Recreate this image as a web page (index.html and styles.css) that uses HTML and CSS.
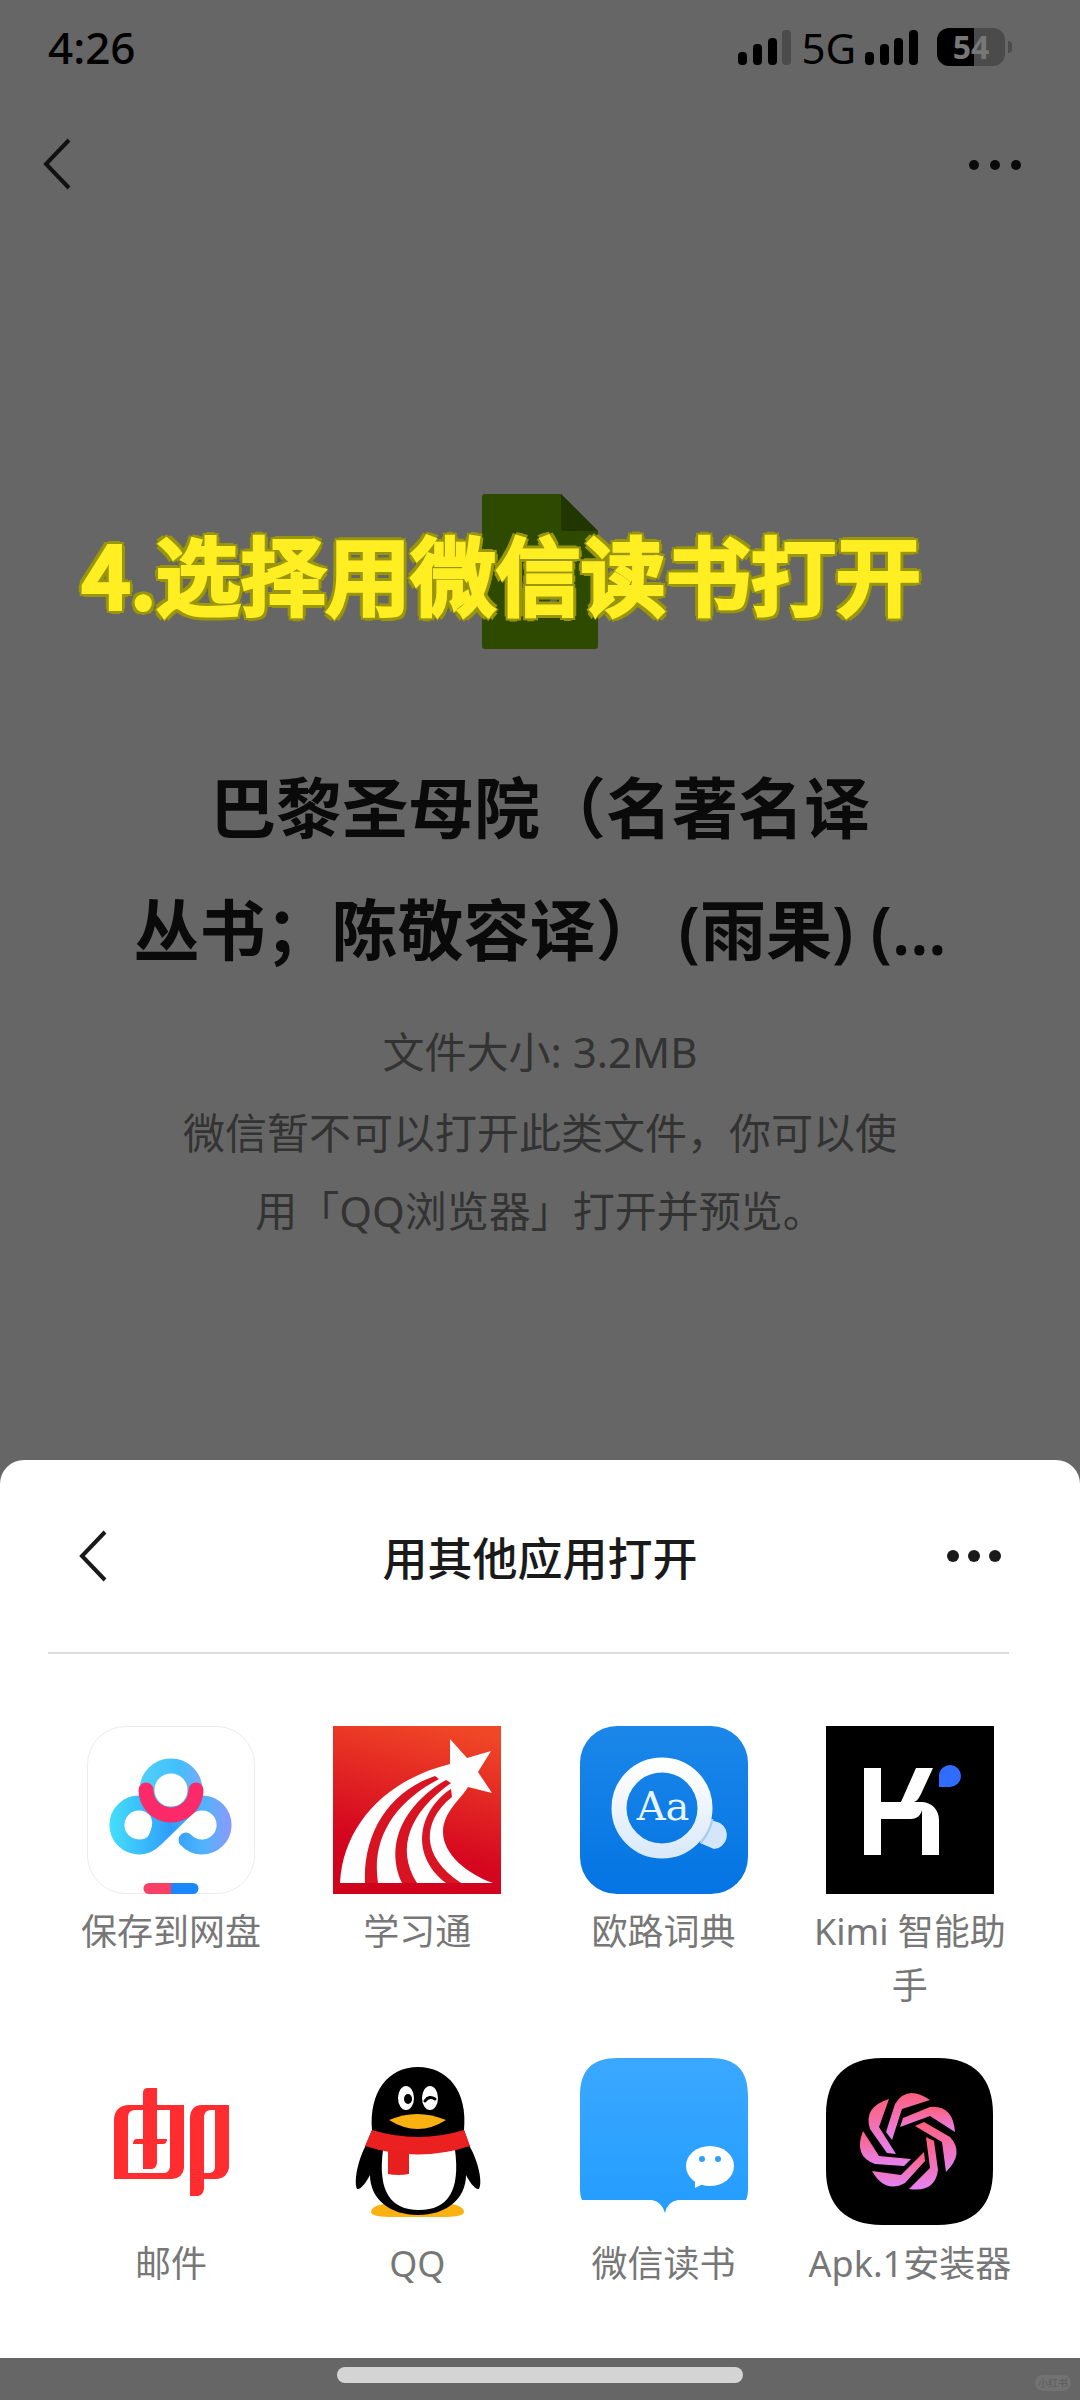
FILE: index.html
```html
<!DOCTYPE html>
<html lang="zh-CN">
<head>
    <meta charset="UTF-8">
    <meta name="viewport" content="width=device-width, initial-scale=1.0">
    <title>用其他应用打开</title>
    <link rel="stylesheet" href="styles.css">
</head>
<body>
    <div class="status-bar">
        <span class="time">4:26</span>
        <div class="status-right">
            <svg class="signal" viewBox="0 0 54 36">
                <rect x="0" y="23" width="9" height="13" rx="4"/>
                <rect x="15" y="15" width="9" height="21" rx="4"/>
                <rect x="30" y="9" width="9" height="27" rx="4"/>
                <rect x="44" y="1" width="9" height="35" rx="4" fill="#4b4b4b"/>
            </svg>
            <span class="network">5G</span>
            <svg class="signal" viewBox="0 0 54 36">
                <rect x="0" y="23" width="9" height="13" rx="4"/>
                <rect x="15" y="15" width="9" height="21" rx="4"/>
                <rect x="29" y="9" width="9" height="27" rx="4"/>
                <rect x="44" y="1" width="9" height="35" rx="4"/>
            </svg>
            <div class="battery">54</div>
        </div>
    </div>

    <header class="nav">
        <button class="icon-btn" aria-label="返回">
            <svg width="30" height="52" viewBox="0 0 30 52"><path d="M27 2L4 26l23 24" fill="none" stroke="#111" stroke-width="4"/></svg>
        </button>
        <button class="icon-btn" aria-label="更多">
            <svg width="54" height="12" viewBox="0 0 54 12" fill="#0a0a0a"><circle cx="6" cy="7" r="5"/><circle cx="27" cy="7" r="5"/><circle cx="48" cy="7" r="5"/></svg>
        </button>
    </header>

    <main class="file">
        <div class="file-cover">
            <svg class="file-icon" viewBox="0 0 116 155">
                <path d="M3 0h76l37 37v115a3 3 0 0 1-3 3H3a3 3 0 0 1-3-3V3a3 3 0 0 1 3-3z" fill="#2d4a00"/>
                <path d="M79 0l37 37H82a3 3 0 0 1-3-3z" fill="#203500"/>
                <path d="M58 74L35 97l23 23 23-23z" fill="none" stroke="#666" stroke-width="5"/>
            </svg>
            <p class="caption">4.选择用微信读书打开</p>
        </div>
        <h1>巴黎圣母院（名著名译<br>丛书；陈敬容译） (雨果) (...</h1>
        <p class="size">文件大小: 3.2MB</p>
        <p class="tip">微信暂不可以打开此类文件，你可以使用「QQ浏览器」打开并预览。</p>
    </main>

    <section class="sheet">
        <div class="sheet-header">
            <button class="icon-btn" aria-label="返回">
                <svg width="30" height="52" viewBox="0 0 30 52"><path d="M27 2L4 26l23 24" fill="none" stroke="#1a1a1a" stroke-width="4"/></svg>
            </button>
            <h2>用其他应用打开</h2>
            <button class="icon-btn" aria-label="更多">
                <svg width="56" height="14" viewBox="0 0 56 14" fill="#1a1a1a"><circle cx="7" cy="7" r="6"/><circle cx="28" cy="7" r="6"/><circle cx="49" cy="7" r="6"/></svg>
            </button>
        </div>
        <hr class="divider">

        <div class="apps">
            <button class="app">
                <svg viewBox="0 0 168 168">
                    <defs>
                        <linearGradient id="pan" gradientUnits="userSpaceOnUse" x1="22" y1="0" x2="146" y2="0">
                            <stop offset="0" stop-color="#45e0fb"/>
                            <stop offset=".5" stop-color="#2f9dfb"/>
                            <stop offset=".75" stop-color="#4db4fc"/>
                            <stop offset="1" stop-color="#8f98fb"/>
                        </linearGradient>
                        <linearGradient id="panTop" gradientUnits="userSpaceOnUse" x1="52" y1="60" x2="116" y2="64">
                            <stop offset="0" stop-color="#52d0f8"/>
                            <stop offset=".6" stop-color="#41bffd"/>
                            <stop offset="1" stop-color="#7fa8fb"/>
                        </linearGradient>
                    </defs>
                    <rect x=".5" y=".5" width="167" height="167" rx="38" fill="#fff" stroke="#ececec"/>
                    <path d="M99 114A22 22 0 1 0 100 83L68 114A22 22 0 1 1 68 84Q78 96 67 115" fill="none" stroke="url(#pan)" stroke-width="15" stroke-linecap="round"/>
                    <circle cx="84" cy="64" r="24" fill="#fff" stroke="url(#panTop)" stroke-width="15"/>
                    <path d="M59 64a24.500 24.500 0 0 0 50 0" fill="none" stroke="#fc2a68" stroke-width="15" stroke-linecap="round"/>
                    <path d="M62 157h22v11H62a5.500 5.500 0 0 1 0-11z" fill="#fb4068"/>
                    <path d="M84 157h22a5.500 5.500 0 0 1 0 11H84z" fill="#1a88fb"/>
                </svg>
                <span>保存到网盘</span>
            </button>
            <button class="app">
                <svg viewBox="0 0 168 168">
                    <defs>
                        <linearGradient id="xxt" x1=".7" y1="0" x2=".45" y2="1">
                            <stop offset="0" stop-color="#f04727"/>
                            <stop offset=".75" stop-color="#d5061f"/>
                            <stop offset="1" stop-color="#d0021b"/>
                        </linearGradient>
                    </defs>
                    <path d="M0 0h168v168H0z" fill="url(#xxt)"/>
                    <path d="M117 13l17 19 24-7-13 21 14 21-24-6c-7 12-25 25-25 45 0 22 24 42 50 51H7c3-57 45-103 110-119z" fill="#fff"/>
                    <path d="M102 50C55 66 30 108 32 157h13C38 112 62 76 106 53z" fill="#d81422"/>
                    <path d="M113 54C75 76 50 115 69 157h15C62 122 77 86 118 57z" fill="#d81422"/>
                    <path d="M118 63C88 82 74 127 113 157h15C87 130 89 95 119 71z" fill="#da1523"/>
                </svg>
                <span>学习通</span>
            </button>
            <button class="app">
                <svg viewBox="0 0 168 168">
                    <defs>
                        <linearGradient id="dict" x1="0" y1="0" x2="0" y2="1">
                            <stop offset="0" stop-color="#1b87ea"/>
                            <stop offset="1" stop-color="#0374e2"/>
                        </linearGradient>
                        <linearGradient id="ring" x1="0" y1="0" x2="0" y2="1">
                            <stop offset="0" stop-color="#fff"/>
                            <stop offset="1" stop-color="#dbeafa"/>
                        </linearGradient>
                    </defs>
                    <rect width="168" height="168" rx="37" fill="url(#dict)"/>
                    <path d="M131 94l9 3a14 14 0 0 1-6 26l-14-6z" fill="#d3e6fa"/>
                    <path d="M132 93a51 51 0 0 1-11 23" fill="none" stroke="#a9cdf3" stroke-width="3"/>
                    <circle cx="82" cy="82" r="43" fill="none" stroke="url(#ring)" stroke-width="15"/>
                    <text x="83" y="94" class="dict-text">Aa</text>
                </svg>
                <span>欧路词典</span>
            </button>
            <button class="app">
                <svg viewBox="0 0 168 168">
                    <path d="M0 0h168v168H0z"/>
                    <path d="M38 42h17v34h20l15-34h17L95 68c-2 4-4 7-7 8h7c11 0 18 8 18 18v35H96V84c-1 5-5 9-11 9H55v36H38z" fill="#fff"/>
                    <path d="M113 61V49a11 11 0 1 1 11 12z" fill="#2f6cff"/>
                </svg>
                <span>Kimi 智能助手</span>
            </button>
            <button class="app">
                <svg viewBox="0 0 168 168" fill="#ff2d2f">
                    <path fill-rule="evenodd" d="M27 121V61q1-13 14-14h56v63q-1 10-12 11zM41 115h37q4-1 5-6V52H48q-6 0-7 6z"/>
                    <path d="M56 35q0-5 5-5h9v75q-1 6-6 6h-8z"/>
                    <path d="M46 86q0-5 4-5h30q0 5-4 5z"/>
                    <path fill-rule="evenodd" d="M103 138V59q1-12 12-12h27v63q-2 10-12 11h-13v10q-1 6-6 7zM117 115h6q5-1 5-6V52h-4q-6 0-7 6z"/>
                </svg>
                <span>邮件</span>
            </button>
            <button class="app">
                <svg viewBox="0 0 168 168">
                    <path d="M38 154c0-6 12-9 25-9h44c12 0 24 3 24 9 0 4-10 5-22 5H60c-12 0-22-1-22-5z" fill="#fbb10f"/>
                    <path d="M39 72C36 34 55 9 85 9s50 25 46 63l6 17c8 14 13 35 9 42-4 1-10-8-13-14 0 24-20 40-48 40s-48-16-48-40c-3 6-9 15-13 14-3-7 0-26 8-42z"/>
                    <path d="M50 92q-8 60 36 60t36-60z" fill="#fff"/>
                    <path d="M39 72q46 14 92 0l6 16q-52 17-105 0z" fill="#eb2020"/>
                    <path d="M55 92h21v24q-11 2-21 0z" fill="#e81f1f"/>
                    <ellipse cx="73" cy="40" rx="8" ry="12" fill="#fff"/>
                    <ellipse cx="97" cy="40" rx="8" ry="12" fill="#fff"/>
                    <ellipse cx="75" cy="41" rx="4" ry="5"/>
                    <path d="M92 43q4-6 10-2" fill="none" stroke="#000" stroke-width="3" stroke-linecap="round"/>
                    <path d="M56 62q28-12 57 0-28 18-57 0z" fill="#fbb10f"/>
                </svg>
                <span>QQ</span>
            </button>
            <button class="app">
                <svg viewBox="0 0 168 168">
                    <defs>
                        <linearGradient id="read" x1="0" y1="0" x2="0" y2="1">
                            <stop offset="0" stop-color="#3ba8ff"/>
                            <stop offset="1" stop-color="#239dff"/>
                        </linearGradient>
                    </defs>
                    <path d="M0 38C0 12 12 0 38 0h92c26 0 38 12 38 38v92q0 8-2 12H98q-11 2-13 13-3-11-13-13H2q-2-4-2-12z" fill="url(#read)"/>
                    <ellipse cx="130" cy="108" rx="24" ry="20" fill="#fff"/>
                    <path d="M115 120v10l10-5z" fill="#fff"/>
                    <circle cx="122" cy="101" r="3" fill="#2ca0ff"/>
                    <circle cx="138" cy="101" r="3" fill="#2ca0ff"/>
                </svg>
                <span>微信读书</span>
            </button>
            <button class="app">
                <svg viewBox="0 0 168 168">
                    <defs>
                        <linearGradient id="blade" x1="0" y1="0" x2="0" y2="1">
                            <stop offset="0" stop-color="#ff5f79"/>
                            <stop offset="1" stop-color="#e583f3"/>
                        </linearGradient>
                    </defs>
                    <path d="M0 56C0 20 20 0 56 0h56c36 0 55 20 55 56v56c0 36-19 55-55 55H56C20 167 0 148 0 112z"/>
                    <g fill="url(#blade)">
                        <path d="M74 69l3-9 27-11q23-2 25 25l-25-16z"/>
                        <path d="M89 68l9-4 26 15q15 16-4 35l-4-30z"/>
                        <path d="M100 79l8 4 4 29q-3 23-29 19l21-21z"/>
                        <path d="M98 94l1 9-20 22q-20 11-33-12l29 4z"/>
                        <path d="M85 101l-7 7-29-2q-22-8-12-33l16 25z"/>
                        <path d="M70 96l-9-1-17-24q-7-22 19-30l-10 28z"/>
                        <path d="M66 82l-6-8 9-28q12-20 35-4l-28 9z"/>
                    </g>
                </svg>
                <span>Apk.1安装器</span>
            </button>
        </div>
    </section>

    <footer class="home-bar">
        <div class="handle"></div>
        <span class="badge">小红书</span>
    </footer>
</body>
</html>
```

FILE: styles.css
```css
* {
    box-sizing: border-box;
}
body {
    margin: 0;
    min-height: 100vh;
    display: flex;
    flex-direction: column;
    background: #666;
    font-family: "Noto Sans", "Noto Sans CJK SC", sans-serif;
    color: #0a0a0a;
}
h1, h2, p {
    margin: 0;
}
button {
    padding: 0;
    border: none;
    background: none;
    font-family: inherit;
    cursor: pointer;
}
svg {
    display: block;
}

/* status bar */
.status-bar {
    height: 94px;
    padding: 0 68px 0 48px;
    display: flex;
    align-items: center;
    justify-content: space-between;
    color: #000;
}
.time {
    font-size: 44px;
    font-weight: 500;
}
.status-right {
    display: flex;
    align-items: center;
    gap: 9px;
}
.signal {
    width: 54px;
    height: 36px;
}
.network {
    font-size: 42px;
}
.battery {
    position: relative;
    width: 68px;
    height: 38px;
    margin: 0 7px 0 9px;
    border-radius: 12px;
    background: linear-gradient(90deg, #000 55%, #4b4b4b 55%);
    color: #777;
    font-size: 32px;
    font-weight: 700;
    line-height: 38px;
    text-align: center;
}
.battery::after {
    content: "";
    position: absolute;
    left: 71px;
    top: 13px;
    width: 4px;
    height: 12px;
    border-radius: 0 4px 4px 0;
    background: #4b4b4b;
}

/* top navigation */
.nav {
    height: 140px;
    padding: 0 58px 0 42px;
    display: flex;
    align-items: center;
    justify-content: space-between;
}

/* file info */
.file {
    flex: 1;
    padding: 260px 120px 0;
    text-align: center;
}
.file-cover {
    position: relative;
    margin-bottom: 97px;
}
.file-icon {
    width: 116px;
    height: 155px;
    margin: 0 auto;
}
.caption {
    position: absolute;
    left: -38px;
    top: 18px;
    font-family: "Noto Sans CJK SC", sans-serif;
    font-size: 85px;
    font-weight: 500;
    line-height: 120px;
    white-space: nowrap;
    color: #ffee22;
    -webkit-text-stroke: 4px #ffee22;
    text-shadow: 5px 0 #9a960a, -5px 0 #9a960a, 0 5px #9a960a, 0 -5px #9a960a,
        4px 4px #9a960a, -4px 4px #9a960a, 4px -4px #9a960a, -4px -4px #9a960a;
}
.file h1 {
    font-size: 66px;
    font-weight: 600;
    line-height: 122px;
    white-space: nowrap;
}
.size, .tip {
    color: #333;
    font-size: 42px;
    line-height: 78px;
}
.size {
    margin-top: 23px;
}
.tip {
    max-width: 730px;
    margin: 3px auto 0;
}

/* bottom sheet */
.sheet {
    background: #fff;
    border-radius: 24px 24px 0 0;
    padding-bottom: 67px;
}
.sheet-header {
    height: 192px;
    padding: 0 78px;
    display: grid;
    grid-template-columns: 1fr auto 1fr;
    align-items: center;
}
.sheet-header .icon-btn {
    justify-self: start;
}
.sheet-header .icon-btn:last-child {
    justify-self: end;
}
.sheet-header h2 {
    font-size: 45px;
    font-weight: 500;
    color: #1a1a1a;
}
.divider {
    height: 2px;
    margin: 0 71px 0 48px;
    border: none;
    background: #dcdcdc;
}
.apps {
    display: grid;
    grid-template-columns: repeat(4, 1fr);
    row-gap: 45px;
    padding: 72px 47px 0 48px;
}
.app {
    display: flex;
    flex-direction: column;
    align-items: center;
    gap: 11px;
    color: #777;
    font-size: 36px;
    line-height: 54px;
}
.app svg {
    width: 168px;
    height: 168px;
}
.app span {
    max-width: 210px;
}
.dict-text {
    font-family: "DejaVu Serif", serif;
    font-size: 40px;
    fill: #eaf4ff;
    text-anchor: middle;
}

/* home indicator */
.home-bar {
    position: relative;
    height: 42px;
    padding-top: 9px;
}
.handle {
    width: 406px;
    height: 16px;
    margin: 0 auto;
    border-radius: 8px;
    background: #d4d4d4;
}
.badge {
    position: absolute;
    right: 9px;
    bottom: 9px;
    width: 36px;
    border-radius: 8px;
    background: #727272;
    color: #5c5c5c;
    font-size: 10px;
    line-height: 16px;
    text-align: center;
}
```
